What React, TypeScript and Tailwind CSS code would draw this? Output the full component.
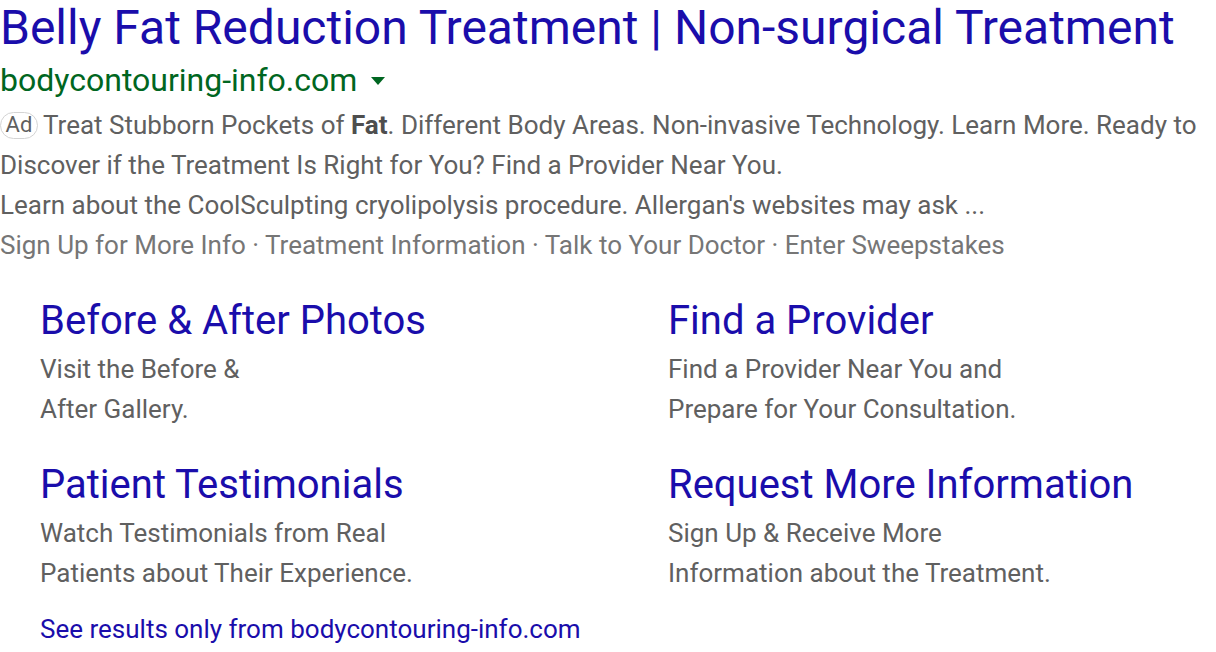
import React from "react";

const Sitelink = ({ title, l1, l2 }: { title: string; l1: string; l2: string }) => (
  <div className="flex flex-col">
    <div className="text-[40px] leading-[48px] text-[#1a0dab] whitespace-nowrap">{title}</div>
    <div className="mt-[4px] text-[26px] leading-[40px] text-[#606060] whitespace-nowrap">
      <div>{l1}</div>
      <div>{l2}</div>
    </div>
  </div>
);

export default function App() {
  return (
    <div className="w-[1216px] h-[652px] bg-white overflow-hidden font-['Roboto',sans-serif]">
      <div className="text-[48px] leading-[56px] text-[#1a0dab] whitespace-nowrap">
        Belly Fat Reduction Treatment | Non-surgical Treatment
      </div>
      <div className="flex items-center h-[48px] text-[32px] leading-[48px] text-[#006621]">
        <span>bodycontouring-info.com</span>
        <span className="ml-[14px] mt-[2px] w-0 h-0 border-l-[7px] border-r-[7px] border-t-[8px] border-l-transparent border-r-transparent border-t-[#006621]" />
      </div>
      <div className="mt-[1px] text-[26px] leading-[40px] text-[#606060]">
        <div>
          <span className="inline-flex items-center justify-center h-[27px] w-[38px] mr-[5px] border border-[#d4d4d4] rounded-[14px] text-[22px] leading-none align-[2px]">
            Ad
          </span>
          Treat Stubborn Pockets of <b className="font-bold text-[#4e4e4e]">Fat</b>. Different Body Areas. Non-invasive Technology. Learn More. Ready to
          Discover if the Treatment Is Right for You? Find a Provider Near You.
        </div>
        <div className="whitespace-nowrap">Learn about the CoolSculpting cryolipolysis procedure. Allergan's websites may ask ...</div>
        <div className="whitespace-nowrap text-[#767676]">
          Sign Up for More Info · Treatment Information · Talk to Your Doctor · Enter Sweepstakes
        </div>
      </div>
      <div className="grid grid-cols-[628px_1fr] pl-[40px] mt-[32px] gap-y-[32px]">
        <Sitelink title="Before & After Photos" l1="Visit the Before &" l2="After Gallery." />
        <Sitelink title="Find a Provider" l1="Find a Provider Near You and" l2="Prepare for Your Consultation." />
        <Sitelink title="Patient Testimonials" l1="Watch Testimonials from Real" l2="Patients about Their Experience." />
        <Sitelink title="Request More Information" l1="Sign Up & Receive More" l2="Information about the Treatment." />
      </div>
      <div className="pl-[40px] mt-[16px] text-[26px] leading-[40px] text-[#1a0dab] whitespace-nowrap">
        See results only from bodycontouring-info.com
      </div>
    </div>
  );
}
